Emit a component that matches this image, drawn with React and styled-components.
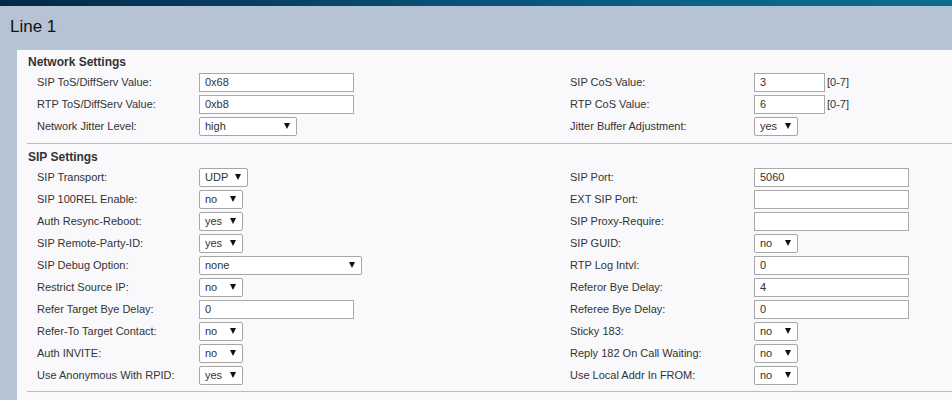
import React from "react";
import styled, { createGlobalStyle } from "styled-components";

const Global = createGlobalStyle`
  html, body { margin: 0; padding: 0; }
  body {
    background: #b5c3d5;
    font-family: "Liberation Sans", Arial, sans-serif;
    overflow: hidden;
  }
`;

const Page = styled.div`
  width: 952px;
  min-height: 400px;
  background: #b5c3d5;
`;

const TopBar = styled.div`
  height: 6px;
  background: linear-gradient(90deg, #022847 0%, #0a4f74 45%, #0a6486 75%, #0a6d8f 100%);
`;

const Header = styled.div`
  padding: 11px 10px 12px 10px;
  font-size: 17px;
  line-height: 20px;
  color: #111;
`;

const Panel = styled.div`
  margin-left: 17px;
  background: #f9f9fc;
  border-top: 1px solid #c3bfe2;
  min-height: 360px;
`;

const Section = styled.div`
  margin-left: 10px;
  border-bottom: 1px solid #b9b8d6;
  padding-bottom: ${(p) => p.$pb}px;
`;

const Heading = styled.div`
  padding: ${(p) => p.$pt}px 0 0 1px;
  font-size: 12px;
  line-height: 14px;
  font-weight: bold;
  color: #333;
  margin-bottom: ${(p) => p.$mb}px;
`;

const Grid = styled.div`
  display: grid;
  grid-template-columns: 162px 371px 184px 1fr;
  grid-auto-rows: 22px;
  align-items: center;
  padding-left: 10px;
`;

const Label = styled.div`
  font-size: 11px;
  color: #333;
  white-space: nowrap;
`;

const Cell = styled.div`
  display: flex;
  align-items: center;
`;

const TextBox = styled.div`
  box-sizing: border-box;
  width: ${(p) => p.$w}px;
  height: 19px;
  border: 1px solid #a9a9a9;
  background: #fff;
  padding-left: 5px;
  font-size: 11px;
  line-height: 17px;
  color: #333;
`;

const Range = styled.span`
  font-size: 11px;
  color: #333;
  margin-left: 2px;
`;

const SelectBox = styled.div`
  box-sizing: border-box;
  width: ${(p) => p.$w}px;
  height: 19px;
  border: 1px solid #a6a6a6;
  border-radius: 2px;
  background: #fff;
  display: flex;
  align-items: center;
  justify-content: space-between;
  padding: 0 6px 0 5px;
  font-size: 11px;
  color: #333;
`;

const Arrow = styled.span`
  width: 0;
  height: 0;
  border-left: 3.5px solid transparent;
  border-right: 3.5px solid transparent;
  border-top: 6px solid #111;
`;

const Control = ({ c }) => {
  if (!c) return <Cell />;
  if (c.t === "sel")
    return (
      <Cell>
        <SelectBox $w={c.w}>
          <span>{c.v}</span>
          <Arrow />
        </SelectBox>
      </Cell>
    );
  if (c.t === "short")
    return (
      <Cell>
        <TextBox $w={71}>{c.v}</TextBox>
        <Range>[0-7]</Range>
      </Cell>
    );
  return (
    <Cell>
      <TextBox $w={155}>{c.v}</TextBox>
    </Cell>
  );
};

const inp = (v) => ({ t: "in", v });
const sel = (v, w = 44) => ({ t: "sel", v, w });
const short = (v) => ({ t: "short", v });

const network = [
  ["SIP ToS/DiffServ Value:", inp("0x68"), "SIP CoS Value:", short("3")],
  ["RTP ToS/DiffServ Value:", inp("0xb8"), "RTP CoS Value:", short("6")],
  ["Network Jitter Level:", sel("high", 98), "Jitter Buffer Adjustment:", sel("yes")],
];

const sip = [
  ["SIP Transport:", sel("UDP", 49), "SIP Port:", inp("5060")],
  ["SIP 100REL Enable:", sel("no"), "EXT SIP Port:", inp("")],
  ["Auth Resync-Reboot:", sel("yes"), "SIP Proxy-Require:", inp("")],
  ["SIP Remote-Party-ID:", sel("yes"), "SIP GUID:", sel("no")],
  ["SIP Debug Option:", sel("none", 163), "RTP Log Intvl:", inp("0")],
  ["Restrict Source IP:", sel("no"), "Referor Bye Delay:", inp("4")],
  ["Refer Target Bye Delay:", inp("0"), "Referee Bye Delay:", inp("0")],
  ["Refer-To Target Contact:", sel("no"), "Sticky 183:", sel("no")],
  ["Auth INVITE:", sel("no"), "Reply 182 On Call Waiting:", sel("no")],
  ["Use Anonymous With RPID:", sel("yes"), "Use Local Addr In FROM:", sel("no")],
];

const Rows = ({ rows }) => (
  <Grid>
    {rows.map((r, i) => (
      <React.Fragment key={i}>
        <Label>{r[0]}</Label>
        <Control c={r[1]} />
        <Label>{r[2]}</Label>
        <Control c={r[3]} />
      </React.Fragment>
    ))}
  </Grid>
);

export default function App() {
  return (
    <Page>
      <Global />
      <TopBar />
      <Header>Line 1</Header>
      <Panel>
        <Section $pb={6}>
          <Heading $pt={5} $mb={2}>Network Settings</Heading>
          <Rows rows={network} />
        </Section>
        <Section $pb={5}>
          <Heading $pt={6} $mb={2}>SIP Settings</Heading>
          <Rows rows={sip} />
        </Section>
      </Panel>
    </Page>
  );
}
